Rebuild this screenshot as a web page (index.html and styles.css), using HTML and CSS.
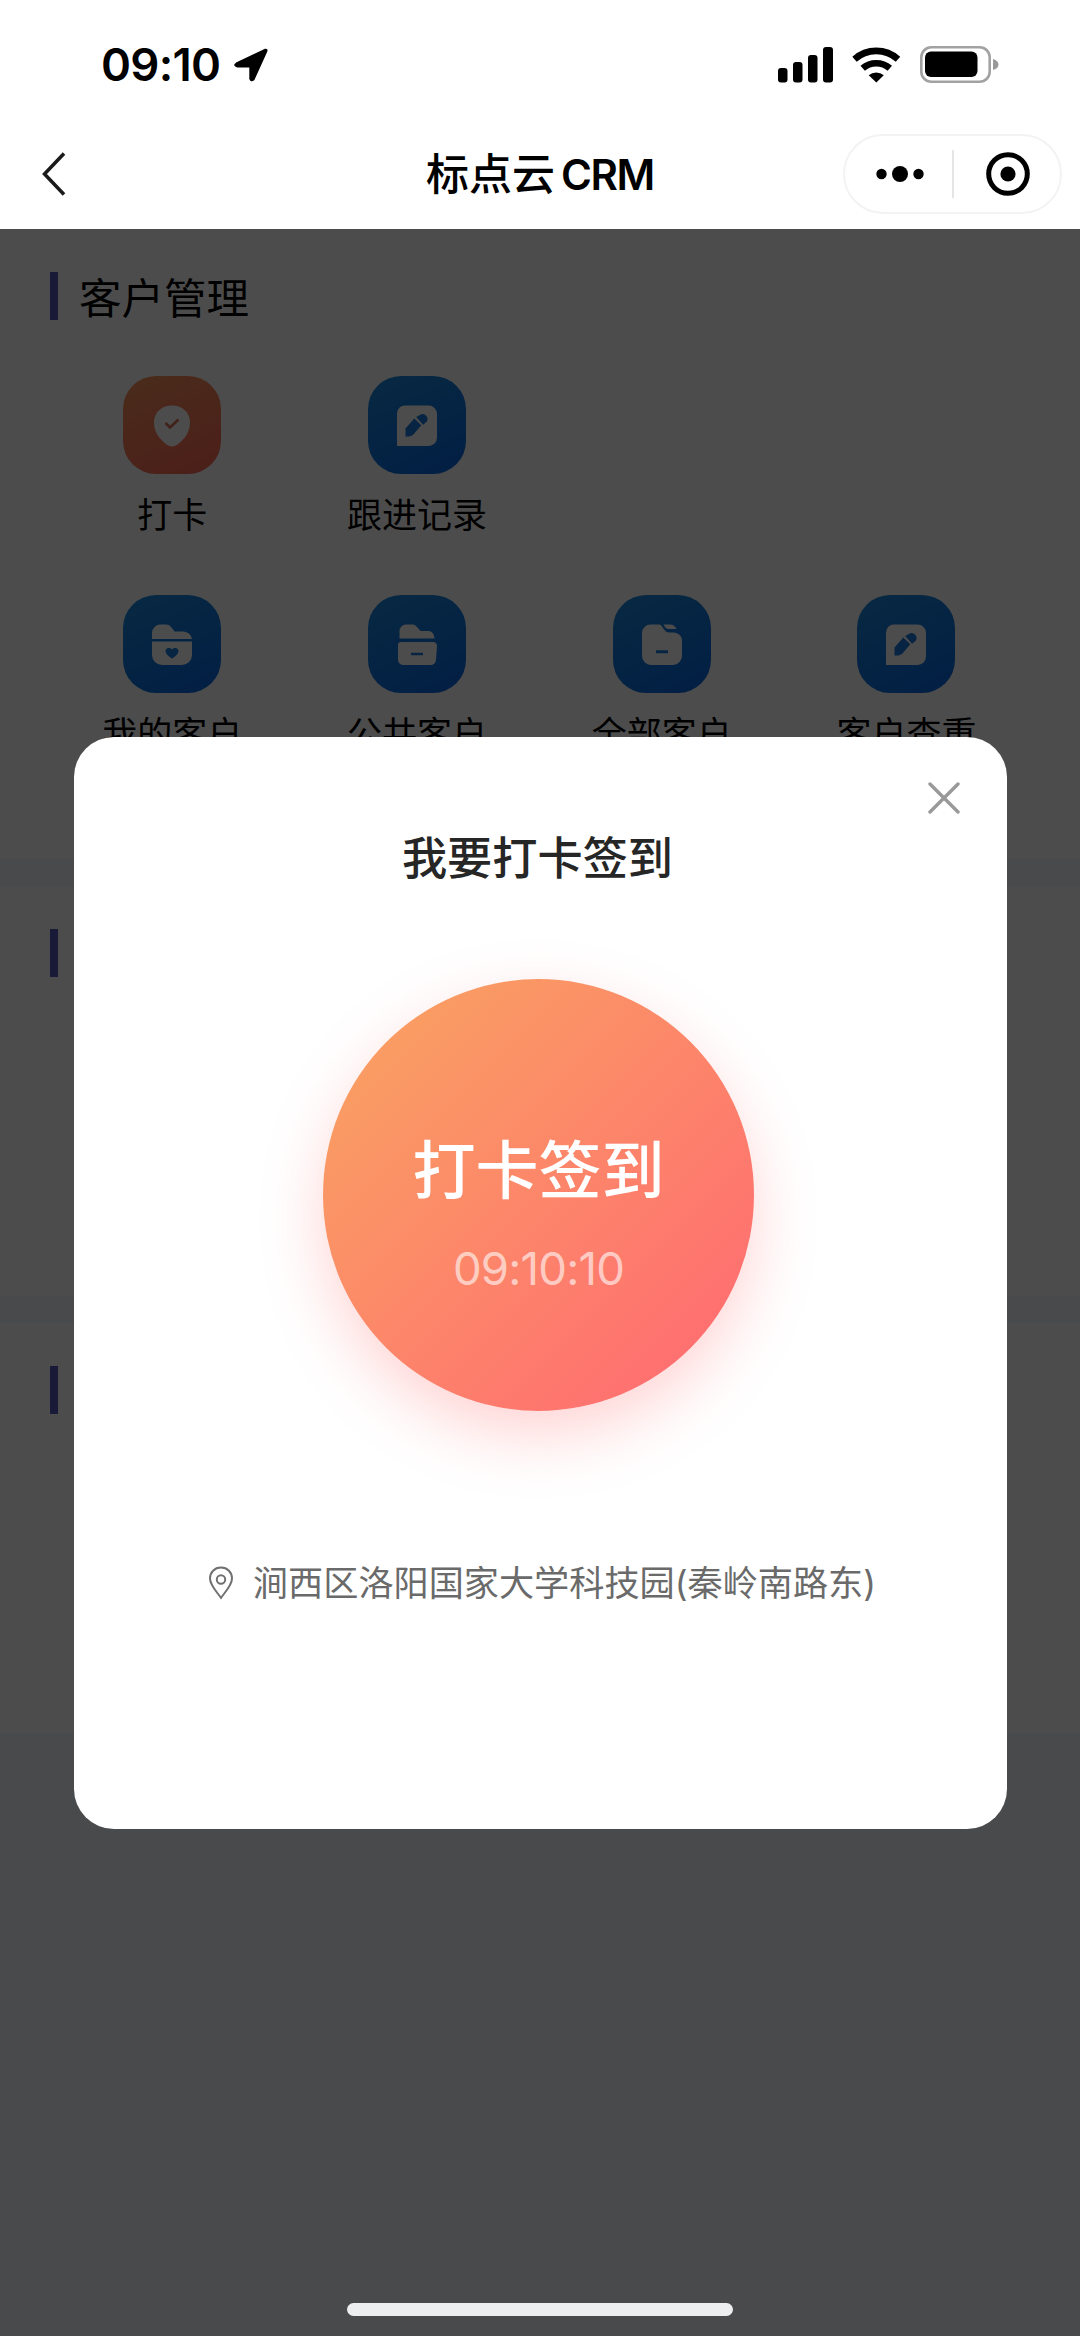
FILE: index.html
```html
<!DOCTYPE html>
<html lang="zh-CN">
<head>
<meta charset="utf-8">
<title>标点云 CRM</title>
<link rel="stylesheet" href="styles.css">
</head>
<body>
<svg class="defs" width="0" height="0" aria-hidden="true">
  <symbol id="note" viewBox="0 0 98 98">
    <path class="glyph" d="M37 29.5h23.500a8.500 8.500 0 0 1 8.500 8.500v23.500a8.500 8.500 0 0 1-8.500 8.500H29V37.500a8 8 0 0 1 8-8z"/>
    <path class="cut" d="M37.500 60.500v-8l8.800-10 7 6.800-8.300 9.700-3.500 1.500zM48.200 41l5-2.800q3-.8 5.300 1.800 2 3 .4 5.400l-3.800 3.400z"/>
  </symbol>
</svg>
<div class="screen">
  <header class="top">
    <div class="status">
      <span class="clock">09:10</span>
      <svg class="locate" width="36" height="36" viewBox="0 0 36 36"><path d="M3.500 16.500 32 2.800q2-.6 1.300 1.600L20.500 32.500q-2.500 2-3.200-.8V19.500H4.500q-4-1-1-3z" stroke="#000" stroke-width="2" stroke-linejoin="round"/></svg>
      <svg class="signals" width="222" height="38" viewBox="0 0 222 38">
        <rect x="0" y="22" width="9.500" height="14.500" rx="3"/><rect x="15" y="16" width="9.500" height="20.500" rx="3"/><rect x="30" y="9" width="9.500" height="27.500" rx="3"/><rect x="45" y="1" width="10" height="35.500" rx="3"/>
        <g fill="none" stroke="#000" stroke-width="6.600"><path d="M76.500 13.200a32.500 32.500 0 0 1 43.500 0"/><path d="M84.700 22.300a20.500 20.500 0 0 1 27.100 0"/></g>
        <path d="M90.700 29.300a11.500 11.500 0 0 1 15.100 0l-7.500 7.200z"/>
        <rect x="143.300" y="1.300" width="68.400" height="34.400" rx="10" fill="none" stroke="#a2a2a2" stroke-width="2.600"/>
        <rect x="147" y="5.500" width="52.500" height="25.500" rx="6"/>
        <path d="M215 13q5.500 1.500 5.500 5.500T215 24z" fill="#999"/>
      </svg>
    </div>
    <nav class="nav">
      <svg class="back" width="26" height="46" viewBox="0 0 26 46"><path d="M23 2.500 3.500 23 23 43.500" fill="none" stroke="#1b1b1b" stroke-width="3.500"/></svg>
      <h1 class="title">标点云<span>CRM</span></h1>
      <div class="capsule">
        <svg width="48" height="18" viewBox="0 0 48 18"><circle cx="5.500" cy="9" r="5.200"/><circle cx="24" cy="9" r="8"/><circle cx="42.500" cy="9" r="5.200"/></svg>
        <i></i>
        <svg class="target" width="46" height="46" viewBox="0 0 46 46"><circle cx="23" cy="23" r="19.300" fill="none" stroke="#000" stroke-width="5"/><circle cx="23" cy="23" r="7.600"/></svg>
      </div>
    </nav>
  </header>

  <main class="content">
    <section class="panel panel-main">
      <h2 class="heading">客户管理</h2>
      <div class="apps">
        <div class="app">
          <svg class="tile warm" viewBox="0 0 98 98"><path class="glyph" d="M49 29.500c9.500 0 18 6 18 17 0 10-6 17-12.500 22q-5.500 4-11 0C37 63.500 31 56.500 31 46.500c0-11 8.500-17 18-17z"/><path d="m42.500 47 4.500 4.500 8.500-8" fill="none" stroke="#e0705c" stroke-width="2.600"/></svg>
          <span>打卡</span>
        </div>
        <div class="app"><svg class="tile"><use href="#note"/></svg><span>跟进记录</span></div>
      </div>
      <div class="apps">
        <div class="app">
          <svg class="tile" viewBox="0 0 98 98"><path class="glyph" d="M29 44v-6a8.500 8.500 0 0 1 8.500-8.500h6q3 0 5 3l3 4h9q7 .5 8.500 7.500zM29 46.500h40V60a10 10 0 0 1-10 10H39a10 10 0 0 1-10-10z"/><path class="cut" d="M49 63.500c-4-2.500-6.500-5-6.500-7.500 0-3 4-4 6.500-1.500 2.500-2.500 6.500-1.500 6.500 1.500 0 2.500-2.500 5-6.500 7.500z"/></svg>
          <span>我的客户</span>
        </div>
        <div class="app">
          <svg class="tile" viewBox="0 0 98 98"><path class="glyph" d="M31.500 43.500V36a6.500 6.500 0 0 1 6.500-6.500h7q2 0 3.500 2l4 4.500H61q5 .5 5.500 7.500zM33 47h32a4 4 0 0 1 4 4.500l-1 13a5.500 5.500 0 0 1-5.500 5.500h-27a5.500 5.500 0 0 1-5.500-5.500v-13q-.5-4.500 3-4.500z"/><path class="cut" d="M43 57.700h12v2.600H43z"/></svg>
          <span>公共客户</span>
        </div>
        <div class="app">
          <svg class="tile" viewBox="0 0 98 98"><path class="glyph" d="M37.500 29.500H46q2 0 3 2l2 3q2 3 5 3h5q8 1 8 8.500V61a9 9 0 0 1-9 9H38a9 9 0 0 1-9-9V38a8.500 8.500 0 0 1 8.500-8.500zM50.500 29.500H57q4.500 0 6.500 4.500H56q-3 0-4-2z"/><path class="cut" d="M43 55.200h12v3H43z"/></svg>
          <span>全部客户</span>
        </div>
        <div class="app"><svg class="tile"><use href="#note"/></svg><span>客户查重</span></div>
      </div>
    </section>
    <section class="panel"><h2 class="heading"></h2></section>
    <section class="panel"><h2 class="heading"></h2></section>
  </main>

  <div class="mask">
    <div class="dialog">
      <svg class="close" width="32" height="32" viewBox="0 0 32 32"><path d="m2 2 28 28M30 2 2 30" stroke="#999" stroke-width="3.400" stroke-linecap="round"/></svg>
      <h3>我要打卡签到</h3>
      <div class="punch"><strong>打卡签到</strong><time>09:10:10</time></div>
      <p class="place">
        <svg width="26" height="34" viewBox="0 0 26 34" fill="none" stroke="#707070" stroke-width="2"><path d="M13 1.500c6.500 0 11 4.800 11 11C24 19 18 25 13 31.800 8 25 2 19 2 12.500c0-6.200 4.500-11 11-11z"/><circle cx="13" cy="13.500" r="4.200"/></svg>
        <span>涧西区洛阳国家大学科技园(秦岭南路东)</span>
      </p>
    </div>
    <div class="home"></div>
  </div>
</div>
</body>
</html>
```
FILE: styles.css
```css
* { box-sizing: border-box; margin: 0; padding: 0; }
body { font-family: Inter, "Noto Sans CJK SC", sans-serif; color: #000; background: #fff; }
svg { display: block; flex: none; }
.defs { position: absolute; }
.screen { position: relative; width: 1080px; height: 2336px; overflow: hidden; background: #f3f7fd; }

.top { height: 229px; background: #fff; }
.status { display: flex; align-items: center; height: 119px; padding: 11px 80px 0 101px; }
.clock { font-size: 45.500px; font-weight: 600; line-height: 54px; letter-spacing: -.7px; width: 119px; white-space: nowrap; }
.locate { margin-left: 13px; }
.signals { margin-left: auto; }
.nav { display: grid; grid-template-columns: 1fr auto 1fr; align-items: center; height: 110px; padding: 0 18px; }
.back { margin-left: 23px; }
.title { font-size: 43px; font-weight: 500; line-height: 60px; white-space: nowrap; }
.title span { margin-left: 6px; font-weight: 600; font-size: 42px; letter-spacing: -1.4px; }
.capsule { justify-self: end; display: flex; align-items: center; width: 219px; height: 80px; padding: 0 29px 0 31px; border: 2px solid #f3f3f3; border-radius: 40px; }
.capsule i { width: 2px; height: 48px; margin-left: 28px; background: #e5e5e5; }
.target { margin-left: auto; }

.panel { height: 410px; margin-bottom: 27px; padding-top: 42px; background: #fff; }
.panel-main { height: 630px; }
.heading { display: flex; align-items: center; height: 49px; padding-left: 50px; font-size: 42.500px; font-weight: 400; }
.heading::before { content: ""; width: 8px; height: 48px; margin-right: 21px; background: #5357b8; }
.apps { display: grid; grid-template-columns: repeat(4, 244.700px); height: 219px; padding-left: 50px; }
.heading + .apps { margin-top: 56px; }
.app { display: flex; flex-direction: column; align-items: center; font-size: 35px; line-height: 52px; }
.app span { margin-top: 15px; }
.tile { width: 98px; height: 98px; border-radius: 33px; background: linear-gradient(155deg, #1b88dc, #0868e4); }
.tile.warm { background: linear-gradient(155deg, #f8935c, #fb6654); }
.glyph { fill: #fff; }
.cut { fill: #1878dc; }

.mask { position: absolute; inset: 229px 0 0; display: flex; flex-direction: column; align-items: center; padding-top: 508px; background: rgba(0, 0, 0, .7); }
.dialog { display: flex; flex-direction: column; align-items: center; width: 933px; height: 1092px; border-radius: 40px; background: #fff; }
.close { align-self: flex-end; margin: 45px 47px 0 0; }
.dialog h3 { margin: 15px 5px 0 0; font-size: 45.200px; font-weight: 500; line-height: 60px; color: #262626; }
.punch { display: flex; flex-direction: column; align-items: center; width: 431px; height: 432px; margin: 90px 3px 0 0; padding-top: 145px; border-radius: 50%; background: linear-gradient(135deg, #f9a062 8%, #ff7070 86%); box-shadow: 0 24px 62px rgba(255, 112, 112, .3); }
.punch strong { font-size: 63px; font-weight: 500; line-height: 92px; color: #fff; }
.punch time { margin-top: 26px; font-size: 45.500px; line-height: 54px; letter-spacing: -.8px; color: rgba(255, 255, 255, .6); }
.place { display: flex; align-items: center; gap: 19px; margin-top: 145px; padding-left: 4px; font-size: 35.150px; line-height: 54px; color: #6a6a6a; white-space: nowrap; }
.home { width: 386px; height: 13px; margin-top: 474px; border-radius: 7px; background: #edeef0; }
```
